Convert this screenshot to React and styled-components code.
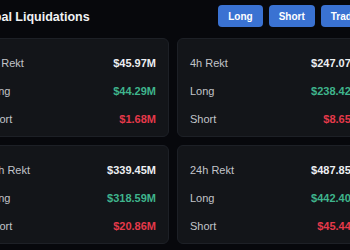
import styled, { createGlobalStyle } from 'styled-components'

const Global = createGlobalStyle`
  html, body {
    margin: 0;
    background: #07080c;
    overflow: hidden;
  }
  body {
    display: flex;
    justify-content: center;
    padding-right: 4px;
    font-family: "Liberation Sans", Arial, sans-serif;
  }
`

const Page = styled.div`
  width: 400px;
  flex-shrink: 0;
  padding-top: 5px;
`

const Header = styled.div`
  display: flex;
  align-items: center;
  justify-content: space-between;
  margin-bottom: 11px;
`

const Title = styled.h1`
  margin: 0;
  padding-top: 2px;
  font-size: 12.5px;
  font-weight: 700;
  color: #f1f2f4;
`

const Actions = styled.div`
  display: flex;
  gap: 6px;
`

const Button = styled.button`
  height: 22px;
  padding: 0 10px;
  border: none;
  border-radius: 4px;
  background: #3a72d2;
  color: #fff;
  font-family: inherit;
  font-size: 10px;
  font-weight: 700;
`

const Grid = styled.div`
  display: grid;
  grid-template-columns: 1fr 1fr;
  gap: 8px;
`

const Card = styled.div`
  height: 99px;
  box-sizing: border-box;
  padding: 10px 12px 5px;
  background: #131519;
  border: 1px solid #1d2026;
  border-radius: 6px;
`

const Row = styled.div`
  height: 28px;
  display: flex;
  align-items: center;
  justify-content: space-between;
  font-size: 11px;
`

const Label = styled.span`
  color: #c2c4c9;
`

const Value = styled.span`
  font-weight: 700;
  color: ${p => p.tone === 'up' ? '#3fb48c' : p.tone === 'down' ? '#e5394a' : '#eceef1'};
`

const DATA = [
  { period: '1h', total: '$45.97M', long: '$44.29M', short: '$1.68M' },
  { period: '4h', total: '$247.07M', long: '$238.42M', short: '$8.65M' },
  { period: '12h', total: '$339.45M', long: '$318.59M', short: '$20.86M' },
  { period: '24h', total: '$487.85M', long: '$442.40M', short: '$45.44M' },
]

export default function App() {
  return (
    <>
      <Global />
      <Page>
        <Header>
          <Title>Global Liquidations</Title>
          <Actions>
            <Button>Long</Button>
            <Button>Short</Button>
            <Button>Trades</Button>
          </Actions>
        </Header>
        <Grid>
          {DATA.map(d => (
            <Card key={d.period}>
              <Row>
                <Label>{d.period} Rekt</Label>
                <Value>{d.total}</Value>
              </Row>
              <Row>
                <Label>Long</Label>
                <Value tone="up">{d.long}</Value>
              </Row>
              <Row>
                <Label>Short</Label>
                <Value tone="down">{d.short}</Value>
              </Row>
            </Card>
          ))}
        </Grid>
      </Page>
    </>
  )
}
